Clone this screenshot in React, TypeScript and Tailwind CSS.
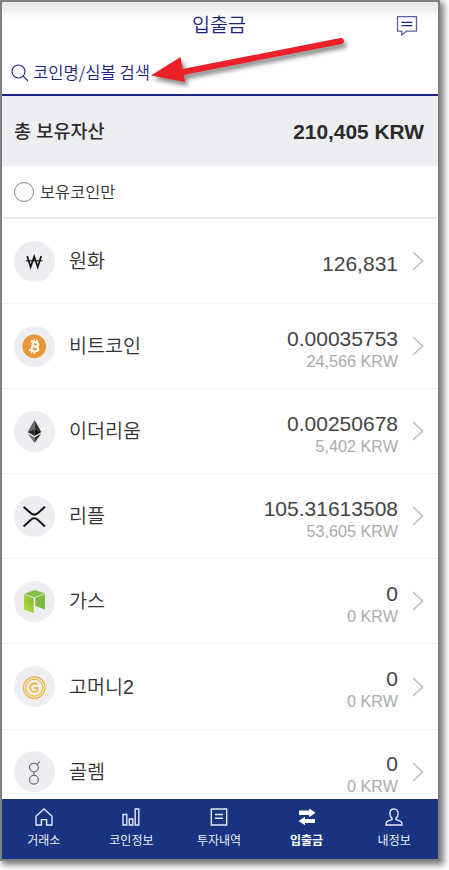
import React from 'react';

interface Coin {
  name: string;
  amount: string;
  krw?: string;
  icon: React.ReactNode;
}

const WonIcon = () => (
  <svg width="40" height="40" viewBox="0 0 40 40" fill="none" stroke="#151515">
    <path d="M13.2 15L16.6 26L20.2 15.6L23.8 26L27.2 15" strokeWidth="1.7" />
    <path d="M11.8 19.8H28.6" strokeWidth="1.1" />
  </svg>
);

const BitcoinIcon = () => (
  <svg width="40" height="40" viewBox="0 0 40 40">
    <circle cx="20.2" cy="20.4" r="11.8" fill="#ea973b" />
    <g transform="rotate(12 20.2 20.4)" fill="none" stroke="#fff">
      <path
        d="M16 16.1H21C23.2 16.1 24 17 24 18.2C24 19.5 23.2 20.3 21.3 20.3H18.4M21.3 20.3C23.8 20.3 24.7 21.2 24.7 22.6C24.7 24.1 23.6 25 21.3 25H16M18.3 16V25"
        strokeWidth="2"
      />
      <path d="M18.9 13.3V16M21.7 13.3V16M18.9 25V27.8M21.7 25V27.8" strokeWidth="1.5" />
    </g>
  </svg>
);

const EthereumIcon = () => (
  <svg width="40" height="40" viewBox="0 0 40 40">
    <path d="M20.5 9V17.9L13.5 21Z" fill="#6b6b6b" />
    <path d="M20.5 9L27.4 21L20.5 17.9Z" fill="#333" />
    <path d="M20.5 17.9V25L13.5 21Z" fill="#2b2b2b" />
    <path d="M20.5 17.9L27.4 21L20.5 25Z" fill="#0c0c0c" />
    <path d="M13.5 22.4L20.5 26.5V32Z" fill="#777" />
    <path d="M27.4 22.4L20.5 26.5V32Z" fill="#333" />
  </svg>
);

const RippleIcon = () => (
  <svg width="40" height="40" viewBox="0 0 40 40" fill="none" stroke="#161616" strokeWidth="2">
    <path d="M9.6 10.8L16.6 17C18.9 19 21.7 19 24 17L31 10.8" />
    <path d="M9.6 30.4L16.6 24C18.9 21.9 21.7 21.9 24 24L31 30.4" />
  </svg>
);

const GasIcon = () => (
  <svg width="40" height="40" viewBox="0 0 40 40">
    <defs>
      <linearGradient id="gas" x1="0" y1="1" x2="1" y2="0">
        <stop offset="0" stopColor="#b9df2f" />
        <stop offset="1" stopColor="#7dbb3f" />
      </linearGradient>
    </defs>
    <path d="M10.2 12.7L20.8 9L30.8 12.3L20.3 16.5Z" fill="#84bf46" />
    <path d="M10 13.6L19.7 17.2V32L10 28.5Z" fill="url(#gas)" />
    <path d="M21.2 17L31 13.1V28.8L21.2 24.8Z" fill="#7fba42" />
  </svg>
);

const GoMoneyIcon = () => (
  <svg width="40" height="40" viewBox="0 0 40 40" fill="none" stroke="#f2b437">
    <circle cx="20.3" cy="20.6" r="10.8" strokeWidth="1.2" />
    <circle cx="20.3" cy="20.6" r="8.5" strokeWidth="1.2" />
    <path d="M23.3 17.6C21.1 15.5 16.1 16.2 16.1 20.6C16.1 25 21.4 25.7 23.6 23.7V20.9H20.2" strokeWidth="1.7" />
  </svg>
);

const GolemIcon = () => (
  <svg width="40" height="40" viewBox="0 0 40 40" fill="none" stroke="#626262" strokeWidth="1.1">
    <circle cx="19.9" cy="15.6" r="4.4" />
    <circle cx="19.9" cy="27.7" r="4.4" />
    <path d="M19.9 20V23.3M23 12.5L25.6 9.6" />
  </svg>
);

const coins: Coin[] = [
  { name: '원화', amount: '126,831', icon: <WonIcon /> },
  { name: '비트코인', amount: '0.00035753', krw: '24,566 KRW', icon: <BitcoinIcon /> },
  { name: '이더리움', amount: '0.00250678', krw: '5,402 KRW', icon: <EthereumIcon /> },
  { name: '리플', amount: '105.31613508', krw: '53,605 KRW', icon: <RippleIcon /> },
  { name: '가스', amount: '0', krw: '0 KRW', icon: <GasIcon /> },
  { name: '고머니2', amount: '0', krw: '0 KRW', icon: <GoMoneyIcon /> },
  { name: '골렘', amount: '0', krw: '0 KRW', icon: <GolemIcon /> },
];

const tabs = [
  {
    label: '거래소',
    icon: <path d="M2 9.2L10 2L18 9.2V18H12.6V12.6H7.4V18H2Z" />,
  },
  {
    label: '코인정보',
    icon: <path d="M2 7.5H5.8V18H2ZM8.3 12H11.8V18H8.3ZM14.2 2H17.8V18H14.2Z" />,
  },
  {
    label: '투자내역',
    icon: <path d="M2.3 2H17.7V18H2.3ZM6 7.5H14M6 11.2H14" />,
  },
  {
    label: '입출금',
    active: true,
    icon: (
      <path
        d="M2 3.6H12.2V1.4L18.6 5.8L12.2 10.2V8H2ZM18 11.9H8V9.8L1.6 14L8 18.2V16.1H18Z"
        fill="#fff"
        stroke="none"
      />
    ),
  },
  {
    label: '내정보',
    icon: (
      <path d="M10 2C7.5 2 5.9 3.9 5.9 6.6C5.9 8.8 6.8 10.4 8 11.2V12.5L3.2 14.4C2.4 14.8 2 15.6 2 18H18C18 15.6 17.6 14.8 16.8 14.4L12 12.5V11.2C13.2 10.4 14.1 8.8 14.1 6.6C14.1 3.9 12.5 2 10 2Z" />
    ),
  },
];

const CoinRow: React.FC<{ coin: Coin }> = ({ coin }) => (
  <li className="flex h-[85.1px] shrink-0 items-center border-b-[1.5px] border-[#f0f0f1] pl-3 pr-[14px]">
    <div className="flex size-[41px] items-center justify-center rounded-full bg-[#edeef2]">
      <div className="-ml-px">{coin.icon}</div>
    </div>
    <span className="ml-[14px] text-[19.6px] font-[350] leading-6 text-[#333]">{coin.name}</span>
    <div className="ml-auto text-right">
      <p className={`text-[21px] leading-6 text-[#444] ${coin.krw ? 'pt-[6px]' : 'pt-[5px]'}`}>{coin.amount}</p>
      {coin.krw && <p className="text-[16.2px] leading-[21px] text-[#ababab]">{coin.krw}</p>}
    </div>
    <svg className="ml-[14px]" width="12" height="20" viewBox="0 0 12 20" fill="none" stroke="#b9b9b9" strokeWidth="1.4">
      <path d="M1.2 1.2L10.6 10L1.2 18.8" />
    </svg>
  </li>
);

export default function App() {
  return (
    <div className="h-[870px] w-[449px] overflow-hidden bg-white font-['Liberation_Sans','Noto_Sans_CJK_KR',sans-serif]">
      <div className="flex h-[861px] w-[440px] flex-col border-2 border-[#808080] bg-white shadow-[3px_3px_6px_1px_rgba(0,0,0,0.5)]">
        {/* 상단 타이틀 및 검색 */}
        <header className="relative flex h-[94px] shrink-0 flex-col border-b-2 border-[#1c2482] bg-[linear-gradient(#e6e6e6,#fff_18px)]">
          <div className="flex h-[46px] items-center">
            <h1 className="w-full pr-0.5 pt-0.5 text-center text-[19.6px] font-[350] text-[#1c2482]">입출금</h1>
            <svg
              className="absolute right-[19px] top-[13px]"
              width="24"
              height="22"
              viewBox="0 0 24 22"
              fill="none"
              stroke="#5a60a8"
              strokeWidth="1.3"
            >
              <path d="M2.5 1.7H21.5V16.2H11.5L6.8 20V16.2H2.5Z" />
              <path d="M6.5 7.3H17.3M6.5 10.7H17.3" stroke="#1c2482" />
            </svg>
          </div>
          <div className="flex h-[46px] items-center pl-[9px] pt-[3px] text-[#1c2482]">
            <svg width="18" height="18" viewBox="0 0 18 18" fill="none" stroke="#1c2482" strokeWidth="1.1">
              <circle cx="7.5" cy="7.5" r="6.5" />
              <path d="M12.2 12.2L17 17" />
            </svg>
            <span className="ml-1 font-['Noto_Sans_CJK_KR',sans-serif] text-[16.6px] font-[350]">코인명/심볼 검색</span>
          </div>
          {/* 검색창을 가리키는 화살표 */}
          <svg
            className="absolute left-[146px] top-[32px] drop-shadow-[3px_4px_2px_rgba(0,0,0,0.45)]"
            width="202"
            height="56"
            viewBox="148 34 202 56"
          >
            <path d="M183 72L341 41" stroke="#ec2027" strokeWidth="6" strokeLinecap="round" />
            <path d="M151 75.5L180.5 57L185 82Z" fill="#ec2027" />
          </svg>
        </header>

        <section className="flex h-[70px] shrink-0 items-center justify-between bg-[#edeef2] pl-3 pr-[14px] text-[#2a2a2a]">
          <h2 className="pt-0.5 text-[18.6px] font-medium">총 보유자산</h2>
          <strong className="pt-px text-[20.9px] font-bold">210,405 KRW</strong>
        </section>

        <label className="flex h-[53px] shrink-0 items-center border-b-2 border-[#ebebeb] pl-3 pt-px text-[16.4px] font-[350] text-[#333]">
          <span className="mr-1.5 size-5 rounded-full border border-[#858585]" />
          보유코인만
        </label>

        <ul className="flex min-h-0 flex-1 flex-col overflow-hidden">
          {coins.map((coin) => (
            <CoinRow key={coin.name} coin={coin} />
          ))}
        </ul>

        <nav className="h-[60px] shrink-0 bg-[#183480]">
          <div className="-ml-0.5 flex w-[438px]">
            {tabs.map((tab) => (
              <div key={tab.label} className="flex flex-1 flex-col items-center pt-[8px]">
                <svg width="20" height="20" viewBox="0 0 20 20" fill="none" stroke="#e4e6f3" strokeWidth="1.4">
                  {tab.icon}
                </svg>
                <span
                  className={`mt-1 text-[12px] leading-5 ${tab.active ? 'font-bold text-white' : 'text-[#eceef7]'}`}
                >
                  {tab.label}
                </span>
              </div>
            ))}
          </div>
        </nav>
      </div>
    </div>
  );
}
